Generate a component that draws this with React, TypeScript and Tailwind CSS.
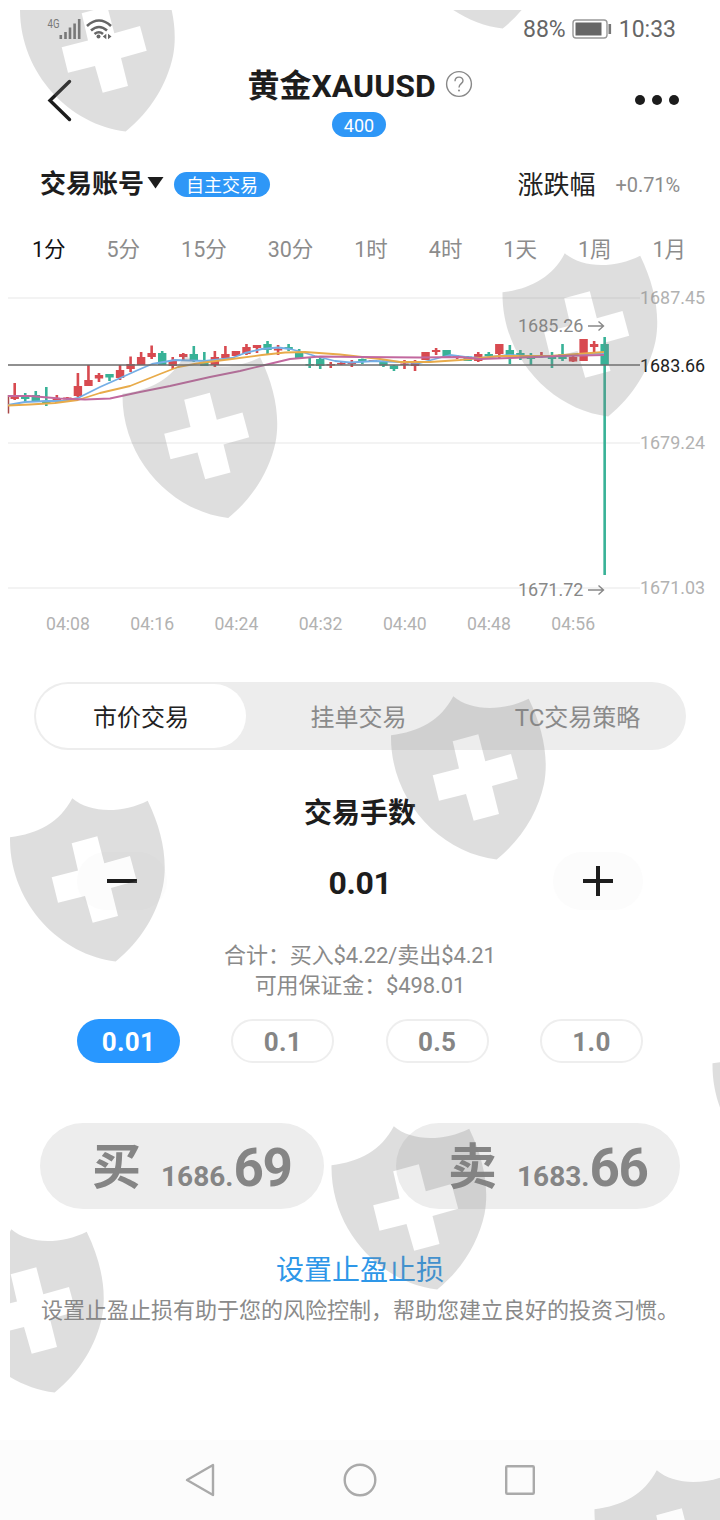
import { clsx } from "clsx";

type Candle = [up: boolean, high: number, low: number, top: number, bottom: number];

const candles: Candle[] = [
  [true, 383, 400, 395, 399],
  [false, 393, 402, 396, 399],
  [false, 391, 402, 395, 401],
  [false, 387, 406, 401, 403],
  [true, 395, 402, 399, 401],
  [true, 397, 400, 397.5, 399.5],
  [true, 373, 397, 386, 396],
  [true, 365, 386, 380, 386],
  [true, 373, 382, 375, 378.5],
  [false, 374, 381, 374, 377.5],
  [true, 365, 380, 370, 378],
  [true, 356.5, 372, 364, 369],
  [true, 352, 365, 357, 365],
  [true, 345.5, 359, 353, 357],
  [false, 351, 365, 353, 365],
  [true, 357, 369, 361, 366],
  [true, 353, 360, 354, 357],
  [false, 346, 362, 354, 360],
  [false, 352, 366, 362, 366],
  [true, 351, 367, 357, 365],
  [true, 346, 359, 354, 358],
  [true, 351, 356, 351, 356],
  [true, 344, 355, 347, 354],
  [true, 345, 353, 345, 348],
  [false, 341, 355, 344, 350],
  [true, 345, 355, 348.5, 350.5],
  [false, 344, 351, 347, 349],
  [false, 349, 358, 353, 358],
  [false, 358, 368, 364, 365.5],
  [false, 357, 369, 359, 366],
  [true, 362, 368, 364, 365.5],
  [true, 362, 365, 363, 364.5],
  [true, 360, 367, 362, 364],
  [false, 358.5, 364, 359, 361],
  [true, 360, 361.5, 360, 361.5],
  [false, 360.5, 367, 362, 365.5],
  [false, 365, 371, 365.5, 369],
  [true, 360, 369, 363.5, 365],
  [true, 360, 371, 361, 366],
  [true, 352, 360, 352, 360],
  [true, 348, 355, 350, 352],
  [false, 350, 357, 350, 357],
  [true, 355, 359, 356, 358],
  [false, 356, 361, 356.5, 361],
  [true, 352, 362, 354, 361],
  [false, 352, 357, 354, 356],
  [true, 344, 358, 344, 354],
  [false, 345, 364, 350, 355],
  [false, 350, 360, 353, 358],
  [false, 353, 365, 356, 359],
  [true, 352, 358, 355, 357],
  [false, 352, 368, 355, 359],
  [false, 344, 361, 354, 359],
  [true, 356, 362, 357, 361.5],
  [true, 339, 361, 339, 361],
  [true, 341, 352, 344, 347],
  [false, 337, 575, 344, 365],
];

const averages = [
  {
    color: "#74aee6",
    points:
      "8,405 25,402 46,401 64,401 78,398 100,387 118,379 138,370 152,364 175,360 205,361 232,358 245,353 262,349 278,347.5 290,349 302,352 315,356 335,361 350,362.5 375,361 400,362 420,363 435,359 450,355 465,357 480,358 510,355 540,357 570,355 604,353",
  },
  {
    color: "#e8ab4a",
    points:
      "8,405.5 30,404.5 55,403 78,400 100,393 130,386 160,374 178,367 200,363 232,359 262,355 285,352.5 305,352 340,354.5 380,359 400,362 430,362 460,360 500,356 550,356 604,352",
  },
  {
    color: "#c2689f",
    points:
      "8,396 30,396 60,398.5 85,399.5 110,398.5 140,392 170,386 210,377 240,371 265,365 290,359 320,356.5 360,357 420,357.5 460,357 480,359 510,358 560,356 604,355",
  },
];

const gridLines = [
  { y: 298, label: "1687.45" },
  { y: 443, label: "1679.24" },
  { y: 588, label: "1671.03" },
];

const times = ["04:08", "04:16", "04:24", "04:32", "04:40", "04:48", "04:56"];
const periods = ["1分", "5分", "15分", "30分", "1时", "4时", "1天", "1周", "1月"];
const lots = ["0.01", "0.1", "0.5", "1.0"];

const shields = [
  [20, -32],
  [397, -135],
  [502.5, 253],
  [122.5, 354.5],
  [391, 696],
  [10, 798],
  [712.5, 1024],
  [331.5, 1126],
  [-51, 1229],
  [594.5, 1470],
];

const shieldPath =
  "M0 39.3C28 36 50 24 62.3 .3C80 15.5 112 15.5 137.7 2.7C152 32 158 62 153 88C147 116 131 143 105.7 163.5C50 157 -1 105 0 39.3Z";
const crossPath =
  "M61.7 45.3L87.3 38.3L94.3 65.3L120 58L126.7 82.7L101 90L108 118L82.7 124.7L75 98L48 104.7L41.7 79.3L68 72.5Z";

function Watermark() {
  return (
    <svg className="pointer-events-none absolute inset-0" width="720" height="1520" viewBox="0 0 720 1520">
      <defs>
        <clipPath id="page">
          <rect x="10" y="10" width="710" height="1510" />
        </clipPath>
      </defs>
      <g clipPath="url(#page)" fill="#808080" fillOpacity="0.26" fillRule="evenodd">
        {shields.map(([x, y]) => (
          <path key={`${x}-${y}`} transform={`translate(${x} ${y})`} d={shieldPath + crossPath} />
        ))}
      </g>
    </svg>
  );
}

function StatusBar() {
  return (
    <div className="flex h-12 items-center justify-between pt-2.5 pr-[44px] pl-[47px] text-[#666]">
      <svg width="66" height="28" viewBox="47 14 66 28" fill="none" stroke="#777" strokeWidth="2.6">
        <text x="47.5" y="27" fontSize="13" fill="#777" stroke="none" textLength="12" lengthAdjust="spacingAndGlyphs">
          4G
        </text>
        <path d="M60.8 34v4M65.5 31v7M70 26.5V38M74.6 22.5V38M79.2 18V38" />
        <path d="M87 25Q99 14 111 25M91 29.5Q99 22.5 107 29.5M94.5 33Q99 29.5 103 33" stroke="#666" />
        <circle cx="98.5" cy="35.5" r="2" fill="#666" stroke="none" />
        <path d="M106.3 32.8v5.4l-3.5-2.7zM108 32.8v5.4l3.5-2.7z" fill="#666" stroke="none" />
      </svg>
      <div className="flex items-center text-[23px] leading-none">
        <span>88%</span>
        <svg className="ml-[6px]" width="40" height="20" viewBox="0 0 40 20">
          <rect x="1" y="1" width="34" height="18" rx="3" fill="none" stroke="#999" strokeWidth="1.4" />
          <rect x="3.5" y="3.5" width="26" height="13" fill="#666" />
          <rect x="36.5" y="5" width="2.6" height="10" fill="#777" />
        </svg>
        <span className="ml-[7px]">10:33</span>
      </div>
    </div>
  );
}

function Header() {
  return (
    <header className="flex h-[104px] items-start justify-between pr-[40px] pl-[46px]">
      <svg className="mt-[31px]" width="28" height="44" viewBox="46 79 28 44" fill="none" stroke="#1c1c1c">
        <path d="M69.5 81.5L50 100.5L69.5 119.5" strokeWidth="3.4" strokeLinecap="round" />
      </svg>
      <div className="mt-[20px] ml-[10px] flex flex-col items-center">
        <div className="ml-[2px] flex h-9 items-center">
          <h1 className="text-[32px] leading-none font-bold whitespace-nowrap text-[#1d1d1d]">
            黄金<span className="inline-block w-[125px]">XAUUSD</span>
          </h1>
          <svg className="ml-[8px] -mt-1" width="28" height="28" viewBox="0 0 28 28" fill="none" stroke="#888">
            <circle cx="14" cy="14" r="12.4" strokeWidth="1.4" />
            <path d="M10 11.3C10 5.7 18 5.9 18 10.8C18 13.6 14 13.8 14 17.4" strokeWidth="1.4" />
            <circle cx="14" cy="20.4" r="1" fill="#888" stroke="none" />
          </svg>
        </div>
        <span className="mt-2 flex h-[25px] w-[54px] items-center justify-center rounded-full bg-[#2e97f7] pt-0.5 text-[18px] leading-none text-white">
          400
        </span>
      </div>
      <svg className="mt-[46px]" width="46" height="12" viewBox="0 0 46 12" fill="#1c1c1c">
        <circle cx="6" cy="6" r="5" />
        <circle cx="23" cy="6" r="5" />
        <circle cx="40" cy="6" r="5" />
      </svg>
    </header>
  );
}

function AccountRow() {
  return (
    <div className="flex h-[64px] items-center pr-[40px] pl-[40px]">
      <span className="text-[26px] leading-none font-bold text-[#1d1d1d]">交易账号</span>
      <svg className="ml-[3px] -mt-1" width="17" height="13" viewBox="0 0 17 13" fill="#1d1d1d">
        <path d="M.5 1h16l-8 11.5z" />
      </svg>
      <span className="ml-[10px] flex h-[25px] w-[96px] items-center justify-center rounded-full bg-[#2e97f7] pt-[4px] text-[18px] leading-none text-white">
        自主交易
      </span>
      <span className="ml-auto pt-0.5 text-[26px] leading-none text-[#222]">涨跌幅</span>
      <span className="ml-[20px] pt-0.5 text-[20px] leading-none tracking-[-0.1px] text-[#8c8c8c]">+0.71%</span>
    </div>
  );
}

function Chart() {
  return (
    <svg className="block" width="720" height="370" viewBox="0 270 720 370">
      {gridLines.map((line) => (
        <g key={line.y}>
          <path d={`M8 ${line.y}H640`} stroke="#efefef" strokeWidth="1.5" />
          <text x="640" y={line.y + 6.2} fontSize="17.9" fill="#b2b2b2">
            {line.label}
          </text>
        </g>
      ))}
      {times.map((time, i) => (
        <text key={time} x={68 + i * 84.2} y="630" fontSize="17.6" fill="#b2b2b2" textAnchor="middle">
          {time}
        </text>
      ))}
      <path d="M8.5 395V413.5" stroke="#a84848" strokeWidth="1.5" />
      {candles.map(([up, high, low, top, bottom], i) => {
        const x = 14.7 + i * 10.535;
        const color = up ? "#d84a50" : "#38b297";
        return (
          <g key={i} fill={color}>
            <rect x={x - 1.3} y={high} width="2.6" height={low - high} />
            <rect x={x - 4.2} y={top} width="8.4" height={bottom - top} />
          </g>
        );
      })}
      {averages.map((line) => (
        <polyline key={line.color} points={line.points} fill="none" stroke={line.color} strokeWidth="1.8" strokeLinejoin="round" />
      ))}
      <path d="M8 365H640" stroke="#6b6b6b" strokeWidth="1.6" />
      <text x="640" y="372" fontSize="17.9" fill="#222">
        1683.66
      </text>
      <g fontSize="18" fill="#888">
        <text x="518" y="332">1685.26</text>
        <text x="518" y="596">1671.72</text>
      </g>
      <path d="M588 326H603.5M598.5 321.5L603.5 326L598.5 330.5M588 590H603.5M598.5 585.5L603.5 590L598.5 594.5" fill="none" stroke="#888" strokeWidth="1.4" />
    </svg>
  );
}

function OrderTabs() {
  return (
    <div className="mx-[34px] mt-[42px] flex h-[68px] rounded-full bg-[#ededed] p-[2px] text-[24px] leading-none text-[#8a8a8a]">
      <div className="flex w-[210px] items-center justify-center rounded-full bg-white pt-[3px] text-[#222]">市价交易</div>
      <div className="flex w-[225px] items-center justify-center pt-[3px]">挂单交易</div>
      <div className="flex flex-1 items-center justify-center pt-[3px]">TC交易策略</div>
    </div>
  );
}

function PriceButton({ label, whole, cents }: { label: string; whole: string; cents: string }) {
  return (
    <div className="flex h-[86px] w-[284px] rounded-full bg-[#ededed] pt-[2px] pl-[52px] leading-[86px] font-bold text-[#858585]">
      <span className="text-[49px]">{label}</span>
      <span className="ml-[20px] whitespace-nowrap">
        <span className="text-[28px]">{whole}.</span>
        <span className="text-[53px] tracking-[-1.2px]">{cents}</span>
      </span>
    </div>
  );
}

export default function App() {
  return (
    <div className="relative flex h-[1520px] w-[720px] flex-col overflow-hidden bg-white font-[Roboto,'Noto_Sans_CJK_SC',sans-serif]">
      <StatusBar />
      <Header />
      <AccountRow />
      <nav className="flex h-[54px] items-center justify-between pt-[13px] pr-[34px] pl-[32px] text-[21.5px] leading-none text-[#8c8c8c]">
        {periods.map((period, i) => (
          <span key={period} className={clsx(i === 0 && "text-[#111]")}>
            {period}
          </span>
        ))}
      </nav>
      <Chart />
      <OrderTabs />

      <h2 className="mt-[46px] h-9 text-center text-[28px] leading-9 font-bold text-[#1d1d1d]">交易手数</h2>
      <div className="mt-[20px] flex h-[58px] items-center justify-between px-[77px]">
        <div className="flex h-[58px] w-[90px] items-center justify-center rounded-full bg-[#fcfcfc]">
          <span className="h-1 w-[30px] bg-[#1d1d1d]" />
        </div>
        <span className="pt-1 text-[32px] leading-none font-bold tracking-[-0.4px] text-[#1d1d1d]">0.01</span>
        <div className="flex h-[58px] w-[90px] items-center justify-center rounded-full bg-[#fcfcfc]">
          <svg width="30" height="30" viewBox="0 0 30 30" stroke="#1d1d1d" strokeWidth="4">
            <path d="M0 15h30M15 0v30" />
          </svg>
        </div>
      </div>
      <div className="mt-[31px] text-center text-[22px] leading-[30px] tracking-[-0.1px] text-[#8a8a8a]">
        <p>合计：买入$4.22/卖出$4.21</p>
        <p>可用保证金：$498.01</p>
      </div>
      <div className="mt-[18px] flex justify-between px-[77px]">
        {lots.map((lot, i) => (
          <span
            key={lot}
            className={clsx(
              "flex h-[44px] w-[103px] items-center justify-center rounded-full pt-0.5 text-[26px] leading-none font-bold tracking-[0.3px]",
              i === 0 ? "bg-[#2897ff] text-white" : "border-2 border-[#eee] text-[#858585]",
            )}
          >
            {lot}
          </span>
        ))}
      </div>
      <div className="mt-[60px] flex justify-between px-[40px]">
        <PriceButton label="买" whole="1686" cents="69" />
        <PriceButton label="卖" whole="1683" cents="66" />
      </div>
      <p className="mt-[42px] text-center text-[28px] leading-10 text-[#2e97e8]">设置止盈止损</p>
      <p className="mt-1 text-center text-[22px] leading-8 whitespace-nowrap text-[#8a8a8a]">
        设置止盈止损有助于您的风险控制，帮助您建立良好的投资习惯。
      </p>

      <div className="mt-auto flex h-[80px] items-center justify-center gap-[124px] bg-[#fcfcfc]">
        <svg width="36" height="36" viewBox="0 0 36 36" fill="none" stroke="#aaa" strokeWidth="2.4" strokeLinejoin="round">
          <path d="M31 3V33L5 18z" />
        </svg>
        <svg width="36" height="36" viewBox="0 0 36 36" fill="none" stroke="#aaa" strokeWidth="2.4">
          <circle cx="18" cy="18" r="15.3" />
        </svg>
        <svg width="36" height="36" viewBox="0 0 36 36" fill="none" stroke="#aaa" strokeWidth="2.4">
          <rect x="4.2" y="4.2" width="27.6" height="27.6" rx="1" />
        </svg>
      </div>
      <Watermark />
    </div>
  );
}
